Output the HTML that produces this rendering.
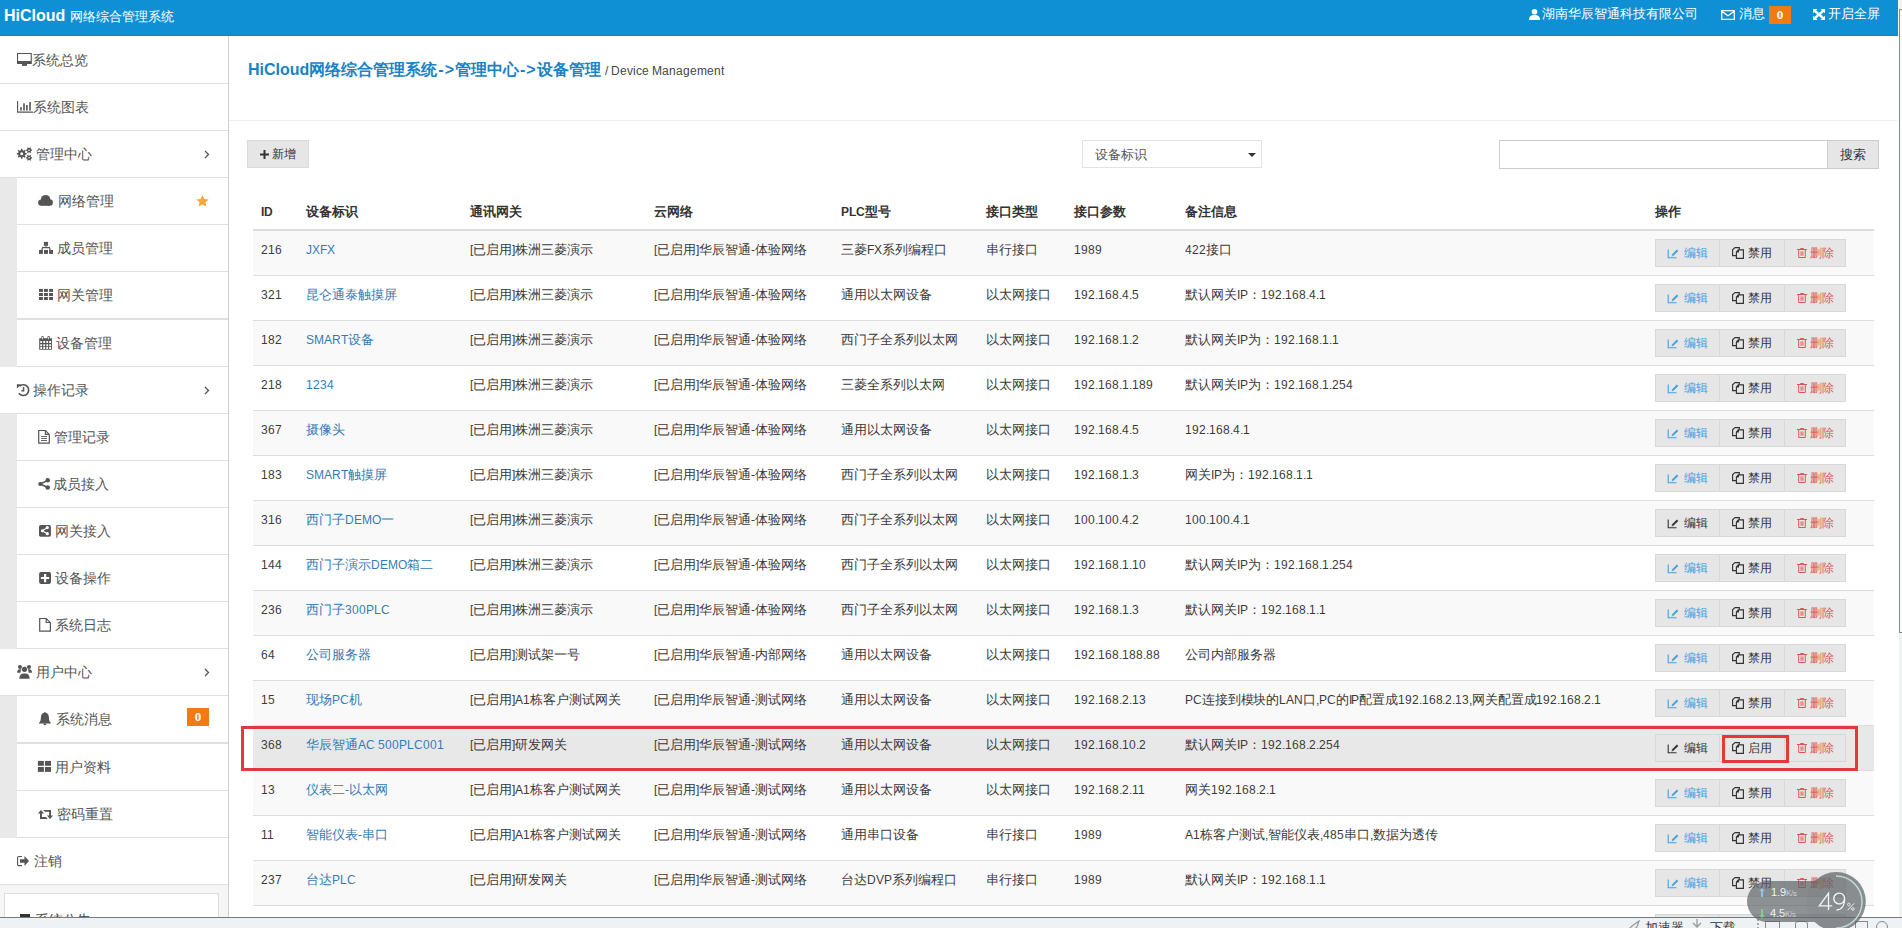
<!DOCTYPE html>
<html><head><meta charset="utf-8"><title>HiCloud</title><style>
@font-face{font-family:"LS";src:local("Liberation Sans");size-adjust:93%;unicode-range:U+0000-024F,U+2000-206F;}
@font-face{font-family:"LS";font-weight:bold;src:local("Liberation Sans Bold");size-adjust:93%;unicode-range:U+0000-024F,U+2000-206F;}
*{box-sizing:border-box}
html,body{margin:0;padding:0;width:1902px;height:928px;overflow:hidden;background:#fff;font-family:"LS","Liberation Sans",sans-serif;font-size:13px;color:#555}
.abs{position:absolute}
#hdr{position:absolute;left:0;top:0;width:1898px;height:36px;background:#0f90d5;border-bottom:1px solid #1682c0;color:#fff}
#hdr .logo{position:absolute;left:4px;top:6px;font-family:"Liberation Sans",sans-serif;font-size:16px;font-weight:bold;line-height:20px;white-space:nowrap}
#hdr .logo span{font-weight:normal;font-size:13px}
#hdr .it{position:absolute;top:6px;line-height:17px;white-space:nowrap}
#side{position:absolute;left:0;top:36px;width:229px;height:892px;border-right:1px solid #cfcfcf;background:#f5f5f5}
.si{position:absolute;left:0;width:228px;background:#fff;border-bottom:1px solid #e0e0e0}
.si.sub{left:17px;width:211px}
.strip{position:absolute;left:0;width:17px;background:#e9e9e9}
.ic{position:absolute;overflow:visible}
.st{position:absolute;top:1px;line-height:46px;font-size:14px;color:#555;white-space:nowrap}
.sub .st{left:0}
.badge{position:absolute;width:22px;height:18px;background:#f07a14;color:#fff;font:bold 13px/18px "Liberation Serif",serif;text-align:center}
#main{position:absolute;left:229px;top:36px;width:1669px;height:881px}
.crumb{position:absolute;left:19px;top:23px;font-family:"Liberation Sans",sans-serif;font-size:16px;font-weight:bold;color:#1a82c6;white-space:nowrap;line-height:22px}
.crumb .ar{letter-spacing:1px;margin-left:1px}
.crumb small{font-family:"LS","Liberation Sans",sans-serif;font-size:13px;font-weight:normal;color:#444}
.hr{position:absolute;left:0;top:84px;width:1669px;height:1px;background:#eee}
.btn{position:absolute;background:#e6e6e6;border:1px solid #dadada;color:#333}
.th{position:absolute;top:203px;font-weight:bold;color:#333;line-height:19px;white-space:nowrap}
.thb{position:absolute;left:253px;top:229px;width:1621px;height:2px;background:#ddd}
.tr{position:absolute;left:253px;width:1621px;height:45px;border-bottom:1px solid #ddd;background:#fff}
.tr.odd{background:#f9f9f9}
.tr.hov{background:#e8e8e8}
.td{position:absolute;top:10px;line-height:19px;white-space:nowrap;color:#3a3a3a}
.td.lk{color:#337ab7}
.bg{position:absolute;left:1402px;top:8px;height:28px;width:191px;display:flex}
.bg span{display:flex;align-items:center;justify-content:center;height:28px;background:#e6e6e6;border:1px solid #d8d8d8;font-size:12px;color:#333;white-space:nowrap}
.bg .b1{width:65px;color:#44a0e2}
.bg .b1.dk{color:#333}
.bg .b2{width:65px;border-left:none}
.bg .b3{width:61px;border-left:none;color:#dd5656}
.bi{margin-right:3px;fill:currentColor}
</style></head><body>
<div id="hdr">
 <div class="logo">HiCloud <span>网络综合管理系统</span></div>
 <svg class="ic" style="left:1529px;top:9px;width:11px;height:11px" viewBox="0 0 11 11" fill="#fff"><circle cx="5.5" cy="2.8" r="2.8"/><path d="M0 11c0-3.3 1.6-5 5.5-5s5.5 1.7 5.5 5z"/></svg>
 <span class="it" style="left:1542px">湖南华辰智通科技有限公司</span>
 <svg class="ic" style="left:1721px;top:10px;width:14px;height:10px" viewBox="0 0 14 10"><path d="M0.7 0.7h12.6v8.6H0.7z M0.7 1.2l6.3 4.6 6.3-4.6" fill="none" stroke="#fff" stroke-width="1.3"/></svg>
 <span class="it" style="left:1739px">消息</span>
 <span class="badge" style="left:1769px;top:6px">0</span>
 <svg class="ic" style="left:1813px;top:9px;width:12px;height:11px" viewBox="0 0 12 11" fill="#fff"><path d="M0 0h4.5L3.2 1.3l2.8 2.6L8.8 1.3 7.5 0H12v4.2L10.7 2.9 8 5.5l2.7 2.6L12 6.8V11H7.5l1.3-1.3L6 7.1 3.2 9.7 4.5 11H0V6.8l1.3 1.3L4 5.5 1.3 2.9 0 4.2z"/></svg>
 <span class="it" style="left:1828px">开启全屏</span>
</div>
<div id="side">
<div class="si" style="top:0px;height:48px;border-bottom-width:1px">
<span class="st" style="left:32px;line-height:47px">系统总览</span>
</div>
<div class="si" style="top:48px;height:47px;border-bottom-width:1px">
<span class="st" style="left:33px;line-height:46px">系统图表</span>
</div>
<div class="si" style="top:95px;height:47px;border-bottom-width:1px">
<span class="st" style="left:36px;line-height:46px">管理中心</span>
<svg class="ic" style="left:204px;top:19px;width:6px;height:9px" viewBox="0 0 6 9"><path d="M1 1l3.5 3.5L1 8" fill="none" stroke="#555" stroke-width="1.3"/></svg>
</div>
<div class="strip" style="top:142px;height:47px"></div>
<div class="si sub" style="top:142px;height:47px;border-bottom-width:1px">
<span class="st" style="left:41px;line-height:46px">网络管理</span>
<svg class="ic" style="left:179px;top:17px;width:13px;height:12px" viewBox="0 0 13 12"><path d="M6.5 0l1.9 4 4.3.4-3.2 2.9.9 4.3-3.9-2.2-3.9 2.2.9-4.3L.3 4.4l4.3-.4z" fill="#f3a93a"/></svg>
</div>
<div class="strip" style="top:189px;height:47px"></div>
<div class="si sub" style="top:189px;height:47px;border-bottom-width:1px">
<span class="st" style="left:40px;line-height:46px">成员管理</span>
</div>
<div class="strip" style="top:236px;height:48px"></div>
<div class="si sub" style="top:236px;height:48px;border-bottom-width:2px">
<span class="st" style="left:40px;line-height:46px">网关管理</span>
</div>
<div class="strip" style="top:284px;height:47px"></div>
<div class="si sub" style="top:284px;height:47px;border-bottom-width:1px">
<span class="st" style="left:39px;line-height:46px">设备管理</span>
</div>
<div class="si" style="top:331px;height:47px;border-bottom-width:1px">
<span class="st" style="left:33px;line-height:46px">操作记录</span>
<svg class="ic" style="left:204px;top:19px;width:6px;height:9px" viewBox="0 0 6 9"><path d="M1 1l3.5 3.5L1 8" fill="none" stroke="#555" stroke-width="1.3"/></svg>
</div>
<div class="strip" style="top:378px;height:47px"></div>
<div class="si sub" style="top:378px;height:47px;border-bottom-width:1px">
<span class="st" style="left:37px;line-height:46px">管理记录</span>
</div>
<div class="strip" style="top:425px;height:47px"></div>
<div class="si sub" style="top:425px;height:47px;border-bottom-width:1px">
<span class="st" style="left:36px;line-height:46px">成员接入</span>
</div>
<div class="strip" style="top:472px;height:47px"></div>
<div class="si sub" style="top:472px;height:47px;border-bottom-width:1px">
<span class="st" style="left:38px;line-height:46px">网关接入</span>
</div>
<div class="strip" style="top:519px;height:47px"></div>
<div class="si sub" style="top:519px;height:47px;border-bottom-width:1px">
<span class="st" style="left:38px;line-height:46px">设备操作</span>
</div>
<div class="strip" style="top:566px;height:47px"></div>
<div class="si sub" style="top:566px;height:47px;border-bottom-width:1px">
<span class="st" style="left:38px;line-height:46px">系统日志</span>
</div>
<div class="si" style="top:613px;height:47px;border-bottom-width:1px">
<span class="st" style="left:36px;line-height:46px">用户中心</span>
<svg class="ic" style="left:204px;top:19px;width:6px;height:9px" viewBox="0 0 6 9"><path d="M1 1l3.5 3.5L1 8" fill="none" stroke="#555" stroke-width="1.3"/></svg>
</div>
<div class="strip" style="top:660px;height:48px"></div>
<div class="si sub" style="top:660px;height:48px;border-bottom-width:2px">
<span class="st" style="left:39px;line-height:46px">系统消息</span>
<span class="badge" style="left:170px;top:12px">0</span>
</div>
<div class="strip" style="top:708px;height:47px"></div>
<div class="si sub" style="top:708px;height:47px;border-bottom-width:1px">
<span class="st" style="left:38px;line-height:46px">用户资料</span>
</div>
<div class="strip" style="top:755px;height:47px"></div>
<div class="si sub" style="top:755px;height:47px;border-bottom-width:1px">
<span class="st" style="left:40px;line-height:46px">密码重置</span>
</div>
<div class="si" style="top:802px;height:47px;border-bottom-width:1px">
<span class="st" style="left:34px;line-height:46px">注销</span>
</div>
<div class="abs" style="left:4px;top:857px;width:215px;height:40px;background:#fff;border:1px solid #ddd"></div>
<div class="abs" style="left:20px;top:878px;width:10px;height:6px;background:#333"></div>
<span class="abs" style="left:35px;top:876px;font-size:14px;line-height:18px;color:#444">系统公告</span>
</div>
<div id="main">
 <div class="crumb">HiCloud网络综合管理系统<span class="ar">-&gt;</span>管理中心<span class="ar">-&gt;</span>设备管理 <small>/ Device Management</small></div>
 <div class="hr"></div>
</div>
<div class="btn" style="left:247px;top:140px;width:62px;height:28px;font-size:12px;line-height:26px;padding-left:12px">
 <svg width="9" height="9" viewBox="0 0 9 9" style="vertical-align:-1px"><path d="M3.5 0h2v3.5H9v2H5.5V9h-2V5.5H0v-2h3.5z" fill="#333"/></svg> 新增</div>
<div class="abs" style="left:1082px;top:140px;width:180px;height:28px;border:1px solid #e3e3e3;background:#fff"></div>
<span class="abs" style="left:1095px;top:146px;line-height:19px;color:#555">设备标识</span>
<svg class="ic" style="left:1248px;top:153px;width:8px;height:4px" viewBox="0 0 8 4"><path d="M0 0h8L4 4z" fill="#333"/></svg>
<div class="abs" style="left:1499px;top:140px;width:329px;height:29px;border:1px solid #ccc;background:#fff"></div>
<div class="abs" style="left:1827px;top:140px;width:52px;height:29px;border:1px solid #ccc;background:#e6e6e6;color:#333;text-align:center;line-height:29px">搜索</div>
<div id="tbl">
<span class="th" style="left:261px">ID</span>
<span class="th" style="left:306px">设备标识</span>
<span class="th" style="left:470px">通讯网关</span>
<span class="th" style="left:654px">云网络</span>
<span class="th" style="left:841px">PLC型号</span>
<span class="th" style="left:986px">接口类型</span>
<span class="th" style="left:1074px">接口参数</span>
<span class="th" style="left:1185px">备注信息</span>
<span class="th" style="left:1655px">操作</span>
<div class="tr odd" style="top:231px">
<span class="td" style="left:8px">216</span>
<span class="td lk" style="left:53px">JXFX</span>
<span class="td" style="left:217px">[已启用]株洲三菱演示</span>
<span class="td" style="left:401px">[已启用]华辰智通-体验网络</span>
<span class="td" style="left:588px">三菱FX系列编程口</span>
<span class="td" style="left:733px">串行接口</span>
<span class="td" style="left:821px">1989</span>
<span class="td" style="left:932px">422接口</span>
<div class="bg"><span class="b1"><svg class="bi" width="13" height="11" viewBox="0 0 13 11" style="margin-right:4px"><path d="M1.2 1.5V9.8H9.5" fill="none" stroke="currentColor" stroke-width="1.1"/><path d="M5.4 7.4l5.2-5.2" fill="none" stroke="currentColor" stroke-width="2"/><path d="M4.6 8.4l.4-1.5 1.1 1.1z"/></svg>编辑</span><span class="b2"><svg class="bi" width="12" height="12" viewBox="0 0 12 12" style="margin-right:4px"><path d="M2.8 0.6H7.3V2.8 M2.8 0.6L0.6 2.8V8.6H4.3" fill="none" stroke="currentColor" stroke-width="1.15"/><path d="M6.4 2.9H11.4V11.4H4.4V4.9Z M6.4 2.9V4.9H4.4" fill="none" stroke="currentColor" stroke-width="1.15"/></svg>禁用</span><span class="b3"><svg class="bi" width="10" height="10" viewBox="0 0 10 10" style="margin-right:3px"><path d="M0 1.5H10 M3.4 1.5V0.5H6.6V1.5 M1.7 1.5V9.5H8.3V1.5 M4.1 3.4V7.8 M5.9 3.4V7.8" fill="none" stroke="currentColor" stroke-width="1"/></svg>删除</span></div>
</div>
<div class="tr" style="top:276px">
<span class="td" style="left:8px">321</span>
<span class="td lk" style="left:53px">昆仑通泰触摸屏</span>
<span class="td" style="left:217px">[已启用]株洲三菱演示</span>
<span class="td" style="left:401px">[已启用]华辰智通-体验网络</span>
<span class="td" style="left:588px">通用以太网设备</span>
<span class="td" style="left:733px">以太网接口</span>
<span class="td" style="left:821px">192.168.4.5</span>
<span class="td" style="left:932px">默认网关IP：192.168.4.1</span>
<div class="bg"><span class="b1"><svg class="bi" width="13" height="11" viewBox="0 0 13 11" style="margin-right:4px"><path d="M1.2 1.5V9.8H9.5" fill="none" stroke="currentColor" stroke-width="1.1"/><path d="M5.4 7.4l5.2-5.2" fill="none" stroke="currentColor" stroke-width="2"/><path d="M4.6 8.4l.4-1.5 1.1 1.1z"/></svg>编辑</span><span class="b2"><svg class="bi" width="12" height="12" viewBox="0 0 12 12" style="margin-right:4px"><path d="M2.8 0.6H7.3V2.8 M2.8 0.6L0.6 2.8V8.6H4.3" fill="none" stroke="currentColor" stroke-width="1.15"/><path d="M6.4 2.9H11.4V11.4H4.4V4.9Z M6.4 2.9V4.9H4.4" fill="none" stroke="currentColor" stroke-width="1.15"/></svg>禁用</span><span class="b3"><svg class="bi" width="10" height="10" viewBox="0 0 10 10" style="margin-right:3px"><path d="M0 1.5H10 M3.4 1.5V0.5H6.6V1.5 M1.7 1.5V9.5H8.3V1.5 M4.1 3.4V7.8 M5.9 3.4V7.8" fill="none" stroke="currentColor" stroke-width="1"/></svg>删除</span></div>
</div>
<div class="tr odd" style="top:321px">
<span class="td" style="left:8px">182</span>
<span class="td lk" style="left:53px">SMART设备</span>
<span class="td" style="left:217px">[已启用]株洲三菱演示</span>
<span class="td" style="left:401px">[已启用]华辰智通-体验网络</span>
<span class="td" style="left:588px">西门子全系列以太网</span>
<span class="td" style="left:733px">以太网接口</span>
<span class="td" style="left:821px">192.168.1.2</span>
<span class="td" style="left:932px">默认网关IP为：192.168.1.1</span>
<div class="bg"><span class="b1"><svg class="bi" width="13" height="11" viewBox="0 0 13 11" style="margin-right:4px"><path d="M1.2 1.5V9.8H9.5" fill="none" stroke="currentColor" stroke-width="1.1"/><path d="M5.4 7.4l5.2-5.2" fill="none" stroke="currentColor" stroke-width="2"/><path d="M4.6 8.4l.4-1.5 1.1 1.1z"/></svg>编辑</span><span class="b2"><svg class="bi" width="12" height="12" viewBox="0 0 12 12" style="margin-right:4px"><path d="M2.8 0.6H7.3V2.8 M2.8 0.6L0.6 2.8V8.6H4.3" fill="none" stroke="currentColor" stroke-width="1.15"/><path d="M6.4 2.9H11.4V11.4H4.4V4.9Z M6.4 2.9V4.9H4.4" fill="none" stroke="currentColor" stroke-width="1.15"/></svg>禁用</span><span class="b3"><svg class="bi" width="10" height="10" viewBox="0 0 10 10" style="margin-right:3px"><path d="M0 1.5H10 M3.4 1.5V0.5H6.6V1.5 M1.7 1.5V9.5H8.3V1.5 M4.1 3.4V7.8 M5.9 3.4V7.8" fill="none" stroke="currentColor" stroke-width="1"/></svg>删除</span></div>
</div>
<div class="tr" style="top:366px">
<span class="td" style="left:8px">218</span>
<span class="td lk" style="left:53px">1234</span>
<span class="td" style="left:217px">[已启用]株洲三菱演示</span>
<span class="td" style="left:401px">[已启用]华辰智通-体验网络</span>
<span class="td" style="left:588px">三菱全系列以太网</span>
<span class="td" style="left:733px">以太网接口</span>
<span class="td" style="left:821px">192.168.1.189</span>
<span class="td" style="left:932px">默认网关IP为：192.168.1.254</span>
<div class="bg"><span class="b1"><svg class="bi" width="13" height="11" viewBox="0 0 13 11" style="margin-right:4px"><path d="M1.2 1.5V9.8H9.5" fill="none" stroke="currentColor" stroke-width="1.1"/><path d="M5.4 7.4l5.2-5.2" fill="none" stroke="currentColor" stroke-width="2"/><path d="M4.6 8.4l.4-1.5 1.1 1.1z"/></svg>编辑</span><span class="b2"><svg class="bi" width="12" height="12" viewBox="0 0 12 12" style="margin-right:4px"><path d="M2.8 0.6H7.3V2.8 M2.8 0.6L0.6 2.8V8.6H4.3" fill="none" stroke="currentColor" stroke-width="1.15"/><path d="M6.4 2.9H11.4V11.4H4.4V4.9Z M6.4 2.9V4.9H4.4" fill="none" stroke="currentColor" stroke-width="1.15"/></svg>禁用</span><span class="b3"><svg class="bi" width="10" height="10" viewBox="0 0 10 10" style="margin-right:3px"><path d="M0 1.5H10 M3.4 1.5V0.5H6.6V1.5 M1.7 1.5V9.5H8.3V1.5 M4.1 3.4V7.8 M5.9 3.4V7.8" fill="none" stroke="currentColor" stroke-width="1"/></svg>删除</span></div>
</div>
<div class="tr odd" style="top:411px">
<span class="td" style="left:8px">367</span>
<span class="td lk" style="left:53px">摄像头</span>
<span class="td" style="left:217px">[已启用]株洲三菱演示</span>
<span class="td" style="left:401px">[已启用]华辰智通-体验网络</span>
<span class="td" style="left:588px">通用以太网设备</span>
<span class="td" style="left:733px">以太网接口</span>
<span class="td" style="left:821px">192.168.4.5</span>
<span class="td" style="left:932px">192.168.4.1</span>
<div class="bg"><span class="b1"><svg class="bi" width="13" height="11" viewBox="0 0 13 11" style="margin-right:4px"><path d="M1.2 1.5V9.8H9.5" fill="none" stroke="currentColor" stroke-width="1.1"/><path d="M5.4 7.4l5.2-5.2" fill="none" stroke="currentColor" stroke-width="2"/><path d="M4.6 8.4l.4-1.5 1.1 1.1z"/></svg>编辑</span><span class="b2"><svg class="bi" width="12" height="12" viewBox="0 0 12 12" style="margin-right:4px"><path d="M2.8 0.6H7.3V2.8 M2.8 0.6L0.6 2.8V8.6H4.3" fill="none" stroke="currentColor" stroke-width="1.15"/><path d="M6.4 2.9H11.4V11.4H4.4V4.9Z M6.4 2.9V4.9H4.4" fill="none" stroke="currentColor" stroke-width="1.15"/></svg>禁用</span><span class="b3"><svg class="bi" width="10" height="10" viewBox="0 0 10 10" style="margin-right:3px"><path d="M0 1.5H10 M3.4 1.5V0.5H6.6V1.5 M1.7 1.5V9.5H8.3V1.5 M4.1 3.4V7.8 M5.9 3.4V7.8" fill="none" stroke="currentColor" stroke-width="1"/></svg>删除</span></div>
</div>
<div class="tr" style="top:456px">
<span class="td" style="left:8px">183</span>
<span class="td lk" style="left:53px">SMART触摸屏</span>
<span class="td" style="left:217px">[已启用]株洲三菱演示</span>
<span class="td" style="left:401px">[已启用]华辰智通-体验网络</span>
<span class="td" style="left:588px">西门子全系列以太网</span>
<span class="td" style="left:733px">以太网接口</span>
<span class="td" style="left:821px">192.168.1.3</span>
<span class="td" style="left:932px">网关IP为：192.168.1.1</span>
<div class="bg"><span class="b1"><svg class="bi" width="13" height="11" viewBox="0 0 13 11" style="margin-right:4px"><path d="M1.2 1.5V9.8H9.5" fill="none" stroke="currentColor" stroke-width="1.1"/><path d="M5.4 7.4l5.2-5.2" fill="none" stroke="currentColor" stroke-width="2"/><path d="M4.6 8.4l.4-1.5 1.1 1.1z"/></svg>编辑</span><span class="b2"><svg class="bi" width="12" height="12" viewBox="0 0 12 12" style="margin-right:4px"><path d="M2.8 0.6H7.3V2.8 M2.8 0.6L0.6 2.8V8.6H4.3" fill="none" stroke="currentColor" stroke-width="1.15"/><path d="M6.4 2.9H11.4V11.4H4.4V4.9Z M6.4 2.9V4.9H4.4" fill="none" stroke="currentColor" stroke-width="1.15"/></svg>禁用</span><span class="b3"><svg class="bi" width="10" height="10" viewBox="0 0 10 10" style="margin-right:3px"><path d="M0 1.5H10 M3.4 1.5V0.5H6.6V1.5 M1.7 1.5V9.5H8.3V1.5 M4.1 3.4V7.8 M5.9 3.4V7.8" fill="none" stroke="currentColor" stroke-width="1"/></svg>删除</span></div>
</div>
<div class="tr odd" style="top:501px">
<span class="td" style="left:8px">316</span>
<span class="td lk" style="left:53px">西门子DEMO一</span>
<span class="td" style="left:217px">[已启用]株洲三菱演示</span>
<span class="td" style="left:401px">[已启用]华辰智通-体验网络</span>
<span class="td" style="left:588px">西门子全系列以太网</span>
<span class="td" style="left:733px">以太网接口</span>
<span class="td" style="left:821px">100.100.4.2</span>
<span class="td" style="left:932px">100.100.4.1</span>
<div class="bg"><span class="b1 dk"><svg class="bi" width="13" height="11" viewBox="0 0 13 11" style="margin-right:4px"><path d="M1.2 1.5V9.8H9.5" fill="none" stroke="currentColor" stroke-width="1.1"/><path d="M5.4 7.4l5.2-5.2" fill="none" stroke="currentColor" stroke-width="2"/><path d="M4.6 8.4l.4-1.5 1.1 1.1z"/></svg>编辑</span><span class="b2"><svg class="bi" width="12" height="12" viewBox="0 0 12 12" style="margin-right:4px"><path d="M2.8 0.6H7.3V2.8 M2.8 0.6L0.6 2.8V8.6H4.3" fill="none" stroke="currentColor" stroke-width="1.15"/><path d="M6.4 2.9H11.4V11.4H4.4V4.9Z M6.4 2.9V4.9H4.4" fill="none" stroke="currentColor" stroke-width="1.15"/></svg>禁用</span><span class="b3"><svg class="bi" width="10" height="10" viewBox="0 0 10 10" style="margin-right:3px"><path d="M0 1.5H10 M3.4 1.5V0.5H6.6V1.5 M1.7 1.5V9.5H8.3V1.5 M4.1 3.4V7.8 M5.9 3.4V7.8" fill="none" stroke="currentColor" stroke-width="1"/></svg>删除</span></div>
</div>
<div class="tr" style="top:546px">
<span class="td" style="left:8px">144</span>
<span class="td lk" style="left:53px">西门子演示DEMO箱二</span>
<span class="td" style="left:217px">[已启用]株洲三菱演示</span>
<span class="td" style="left:401px">[已启用]华辰智通-体验网络</span>
<span class="td" style="left:588px">西门子全系列以太网</span>
<span class="td" style="left:733px">以太网接口</span>
<span class="td" style="left:821px">192.168.1.10</span>
<span class="td" style="left:932px">默认网关IP为：192.168.1.254</span>
<div class="bg"><span class="b1"><svg class="bi" width="13" height="11" viewBox="0 0 13 11" style="margin-right:4px"><path d="M1.2 1.5V9.8H9.5" fill="none" stroke="currentColor" stroke-width="1.1"/><path d="M5.4 7.4l5.2-5.2" fill="none" stroke="currentColor" stroke-width="2"/><path d="M4.6 8.4l.4-1.5 1.1 1.1z"/></svg>编辑</span><span class="b2"><svg class="bi" width="12" height="12" viewBox="0 0 12 12" style="margin-right:4px"><path d="M2.8 0.6H7.3V2.8 M2.8 0.6L0.6 2.8V8.6H4.3" fill="none" stroke="currentColor" stroke-width="1.15"/><path d="M6.4 2.9H11.4V11.4H4.4V4.9Z M6.4 2.9V4.9H4.4" fill="none" stroke="currentColor" stroke-width="1.15"/></svg>禁用</span><span class="b3"><svg class="bi" width="10" height="10" viewBox="0 0 10 10" style="margin-right:3px"><path d="M0 1.5H10 M3.4 1.5V0.5H6.6V1.5 M1.7 1.5V9.5H8.3V1.5 M4.1 3.4V7.8 M5.9 3.4V7.8" fill="none" stroke="currentColor" stroke-width="1"/></svg>删除</span></div>
</div>
<div class="tr odd" style="top:591px">
<span class="td" style="left:8px">236</span>
<span class="td lk" style="left:53px">西门子300PLC</span>
<span class="td" style="left:217px">[已启用]株洲三菱演示</span>
<span class="td" style="left:401px">[已启用]华辰智通-体验网络</span>
<span class="td" style="left:588px">西门子全系列以太网</span>
<span class="td" style="left:733px">以太网接口</span>
<span class="td" style="left:821px">192.168.1.3</span>
<span class="td" style="left:932px">默认网关IP：192.168.1.1</span>
<div class="bg"><span class="b1"><svg class="bi" width="13" height="11" viewBox="0 0 13 11" style="margin-right:4px"><path d="M1.2 1.5V9.8H9.5" fill="none" stroke="currentColor" stroke-width="1.1"/><path d="M5.4 7.4l5.2-5.2" fill="none" stroke="currentColor" stroke-width="2"/><path d="M4.6 8.4l.4-1.5 1.1 1.1z"/></svg>编辑</span><span class="b2"><svg class="bi" width="12" height="12" viewBox="0 0 12 12" style="margin-right:4px"><path d="M2.8 0.6H7.3V2.8 M2.8 0.6L0.6 2.8V8.6H4.3" fill="none" stroke="currentColor" stroke-width="1.15"/><path d="M6.4 2.9H11.4V11.4H4.4V4.9Z M6.4 2.9V4.9H4.4" fill="none" stroke="currentColor" stroke-width="1.15"/></svg>禁用</span><span class="b3"><svg class="bi" width="10" height="10" viewBox="0 0 10 10" style="margin-right:3px"><path d="M0 1.5H10 M3.4 1.5V0.5H6.6V1.5 M1.7 1.5V9.5H8.3V1.5 M4.1 3.4V7.8 M5.9 3.4V7.8" fill="none" stroke="currentColor" stroke-width="1"/></svg>删除</span></div>
</div>
<div class="tr" style="top:636px">
<span class="td" style="left:8px">64</span>
<span class="td lk" style="left:53px">公司服务器</span>
<span class="td" style="left:217px">[已启用]测试架一号</span>
<span class="td" style="left:401px">[已启用]华辰智通-内部网络</span>
<span class="td" style="left:588px">通用以太网设备</span>
<span class="td" style="left:733px">以太网接口</span>
<span class="td" style="left:821px">192.168.188.88</span>
<span class="td" style="left:932px">公司内部服务器</span>
<div class="bg"><span class="b1"><svg class="bi" width="13" height="11" viewBox="0 0 13 11" style="margin-right:4px"><path d="M1.2 1.5V9.8H9.5" fill="none" stroke="currentColor" stroke-width="1.1"/><path d="M5.4 7.4l5.2-5.2" fill="none" stroke="currentColor" stroke-width="2"/><path d="M4.6 8.4l.4-1.5 1.1 1.1z"/></svg>编辑</span><span class="b2"><svg class="bi" width="12" height="12" viewBox="0 0 12 12" style="margin-right:4px"><path d="M2.8 0.6H7.3V2.8 M2.8 0.6L0.6 2.8V8.6H4.3" fill="none" stroke="currentColor" stroke-width="1.15"/><path d="M6.4 2.9H11.4V11.4H4.4V4.9Z M6.4 2.9V4.9H4.4" fill="none" stroke="currentColor" stroke-width="1.15"/></svg>禁用</span><span class="b3"><svg class="bi" width="10" height="10" viewBox="0 0 10 10" style="margin-right:3px"><path d="M0 1.5H10 M3.4 1.5V0.5H6.6V1.5 M1.7 1.5V9.5H8.3V1.5 M4.1 3.4V7.8 M5.9 3.4V7.8" fill="none" stroke="currentColor" stroke-width="1"/></svg>删除</span></div>
</div>
<div class="tr odd" style="top:681px">
<span class="td" style="left:8px">15</span>
<span class="td lk" style="left:53px">现场PC机</span>
<span class="td" style="left:217px">[已启用]A1栋客户测试网关</span>
<span class="td" style="left:401px">[已启用]华辰智通-测试网络</span>
<span class="td" style="left:588px">通用以太网设备</span>
<span class="td" style="left:733px">以太网接口</span>
<span class="td" style="left:821px">192.168.2.13</span>
<span class="td" style="left:932px;letter-spacing:-0.09px">PC连接到模块的LAN口,PC的IP配置成192.168.2.13,网关配置成192.168.2.1</span>
<div class="bg"><span class="b1"><svg class="bi" width="13" height="11" viewBox="0 0 13 11" style="margin-right:4px"><path d="M1.2 1.5V9.8H9.5" fill="none" stroke="currentColor" stroke-width="1.1"/><path d="M5.4 7.4l5.2-5.2" fill="none" stroke="currentColor" stroke-width="2"/><path d="M4.6 8.4l.4-1.5 1.1 1.1z"/></svg>编辑</span><span class="b2"><svg class="bi" width="12" height="12" viewBox="0 0 12 12" style="margin-right:4px"><path d="M2.8 0.6H7.3V2.8 M2.8 0.6L0.6 2.8V8.6H4.3" fill="none" stroke="currentColor" stroke-width="1.15"/><path d="M6.4 2.9H11.4V11.4H4.4V4.9Z M6.4 2.9V4.9H4.4" fill="none" stroke="currentColor" stroke-width="1.15"/></svg>禁用</span><span class="b3"><svg class="bi" width="10" height="10" viewBox="0 0 10 10" style="margin-right:3px"><path d="M0 1.5H10 M3.4 1.5V0.5H6.6V1.5 M1.7 1.5V9.5H8.3V1.5 M4.1 3.4V7.8 M5.9 3.4V7.8" fill="none" stroke="currentColor" stroke-width="1"/></svg>删除</span></div>
</div>
<div class="tr hov" style="top:726px">
<span class="td" style="left:8px">368</span>
<span class="td lk" style="left:53px">华辰智通AC 500PLC001</span>
<span class="td" style="left:217px">[已启用]研发网关</span>
<span class="td" style="left:401px">[已启用]华辰智通-测试网络</span>
<span class="td" style="left:588px">通用以太网设备</span>
<span class="td" style="left:733px">以太网接口</span>
<span class="td" style="left:821px">192.168.10.2</span>
<span class="td" style="left:932px">默认网关IP：192.168.2.254</span>
<div class="bg"><span class="b1 dk"><svg class="bi" width="13" height="11" viewBox="0 0 13 11" style="margin-right:4px"><path d="M1.2 1.5V9.8H9.5" fill="none" stroke="currentColor" stroke-width="1.1"/><path d="M5.4 7.4l5.2-5.2" fill="none" stroke="currentColor" stroke-width="2"/><path d="M4.6 8.4l.4-1.5 1.1 1.1z"/></svg>编辑</span><span class="b2"><svg class="bi" width="12" height="12" viewBox="0 0 12 12" style="margin-right:4px"><path d="M2.8 0.6H7.3V2.8 M2.8 0.6L0.6 2.8V8.6H4.3" fill="none" stroke="currentColor" stroke-width="1.15"/><path d="M6.4 2.9H11.4V11.4H4.4V4.9Z M6.4 2.9V4.9H4.4" fill="none" stroke="currentColor" stroke-width="1.15"/></svg>启用</span><span class="b3"><svg class="bi" width="10" height="10" viewBox="0 0 10 10" style="margin-right:3px"><path d="M0 1.5H10 M3.4 1.5V0.5H6.6V1.5 M1.7 1.5V9.5H8.3V1.5 M4.1 3.4V7.8 M5.9 3.4V7.8" fill="none" stroke="currentColor" stroke-width="1"/></svg>删除</span></div>
</div>
<div class="tr odd" style="top:771px">
<span class="td" style="left:8px">13</span>
<span class="td lk" style="left:53px">仪表二-以太网</span>
<span class="td" style="left:217px">[已启用]A1栋客户测试网关</span>
<span class="td" style="left:401px">[已启用]华辰智通-测试网络</span>
<span class="td" style="left:588px">通用以太网设备</span>
<span class="td" style="left:733px">以太网接口</span>
<span class="td" style="left:821px">192.168.2.11</span>
<span class="td" style="left:932px">网关192.168.2.1</span>
<div class="bg"><span class="b1"><svg class="bi" width="13" height="11" viewBox="0 0 13 11" style="margin-right:4px"><path d="M1.2 1.5V9.8H9.5" fill="none" stroke="currentColor" stroke-width="1.1"/><path d="M5.4 7.4l5.2-5.2" fill="none" stroke="currentColor" stroke-width="2"/><path d="M4.6 8.4l.4-1.5 1.1 1.1z"/></svg>编辑</span><span class="b2"><svg class="bi" width="12" height="12" viewBox="0 0 12 12" style="margin-right:4px"><path d="M2.8 0.6H7.3V2.8 M2.8 0.6L0.6 2.8V8.6H4.3" fill="none" stroke="currentColor" stroke-width="1.15"/><path d="M6.4 2.9H11.4V11.4H4.4V4.9Z M6.4 2.9V4.9H4.4" fill="none" stroke="currentColor" stroke-width="1.15"/></svg>禁用</span><span class="b3"><svg class="bi" width="10" height="10" viewBox="0 0 10 10" style="margin-right:3px"><path d="M0 1.5H10 M3.4 1.5V0.5H6.6V1.5 M1.7 1.5V9.5H8.3V1.5 M4.1 3.4V7.8 M5.9 3.4V7.8" fill="none" stroke="currentColor" stroke-width="1"/></svg>删除</span></div>
</div>
<div class="tr" style="top:816px">
<span class="td" style="left:8px">11</span>
<span class="td lk" style="left:53px">智能仪表-串口</span>
<span class="td" style="left:217px">[已启用]A1栋客户测试网关</span>
<span class="td" style="left:401px">[已启用]华辰智通-测试网络</span>
<span class="td" style="left:588px">通用串口设备</span>
<span class="td" style="left:733px">串行接口</span>
<span class="td" style="left:821px">1989</span>
<span class="td" style="left:932px">A1栋客户测试,智能仪表,485串口,数据为透传</span>
<div class="bg"><span class="b1"><svg class="bi" width="13" height="11" viewBox="0 0 13 11" style="margin-right:4px"><path d="M1.2 1.5V9.8H9.5" fill="none" stroke="currentColor" stroke-width="1.1"/><path d="M5.4 7.4l5.2-5.2" fill="none" stroke="currentColor" stroke-width="2"/><path d="M4.6 8.4l.4-1.5 1.1 1.1z"/></svg>编辑</span><span class="b2"><svg class="bi" width="12" height="12" viewBox="0 0 12 12" style="margin-right:4px"><path d="M2.8 0.6H7.3V2.8 M2.8 0.6L0.6 2.8V8.6H4.3" fill="none" stroke="currentColor" stroke-width="1.15"/><path d="M6.4 2.9H11.4V11.4H4.4V4.9Z M6.4 2.9V4.9H4.4" fill="none" stroke="currentColor" stroke-width="1.15"/></svg>禁用</span><span class="b3"><svg class="bi" width="10" height="10" viewBox="0 0 10 10" style="margin-right:3px"><path d="M0 1.5H10 M3.4 1.5V0.5H6.6V1.5 M1.7 1.5V9.5H8.3V1.5 M4.1 3.4V7.8 M5.9 3.4V7.8" fill="none" stroke="currentColor" stroke-width="1"/></svg>删除</span></div>
</div>
<div class="tr odd" style="top:861px">
<span class="td" style="left:8px">237</span>
<span class="td lk" style="left:53px">台达PLC</span>
<span class="td" style="left:217px">[已启用]研发网关</span>
<span class="td" style="left:401px">[已启用]华辰智通-测试网络</span>
<span class="td" style="left:588px">台达DVP系列编程口</span>
<span class="td" style="left:733px">串行接口</span>
<span class="td" style="left:821px">1989</span>
<span class="td" style="left:932px">默认网关IP：192.168.1.1</span>
<div class="bg"><span class="b1"><svg class="bi" width="13" height="11" viewBox="0 0 13 11" style="margin-right:4px"><path d="M1.2 1.5V9.8H9.5" fill="none" stroke="currentColor" stroke-width="1.1"/><path d="M5.4 7.4l5.2-5.2" fill="none" stroke="currentColor" stroke-width="2"/><path d="M4.6 8.4l.4-1.5 1.1 1.1z"/></svg>编辑</span><span class="b2"><svg class="bi" width="12" height="12" viewBox="0 0 12 12" style="margin-right:4px"><path d="M2.8 0.6H7.3V2.8 M2.8 0.6L0.6 2.8V8.6H4.3" fill="none" stroke="currentColor" stroke-width="1.15"/><path d="M6.4 2.9H11.4V11.4H4.4V4.9Z M6.4 2.9V4.9H4.4" fill="none" stroke="currentColor" stroke-width="1.15"/></svg>禁用</span><span class="b3"><svg class="bi" width="10" height="10" viewBox="0 0 10 10" style="margin-right:3px"><path d="M0 1.5H10 M3.4 1.5V0.5H6.6V1.5 M1.7 1.5V9.5H8.3V1.5 M4.1 3.4V7.8 M5.9 3.4V7.8" fill="none" stroke="currentColor" stroke-width="1"/></svg>删除</span></div>
</div>
<div class="tr" style="top:906px">
<span class="td" style="left:8px"></span>
<span class="td lk" style="left:53px"></span>
<span class="td" style="left:217px"></span>
<span class="td" style="left:401px"></span>
<span class="td" style="left:588px"></span>
<span class="td" style="left:733px"></span>
<span class="td" style="left:821px"></span>
<span class="td" style="left:932px"></span>
<div class="bg"><span class="b1"><svg class="bi" width="13" height="11" viewBox="0 0 13 11" style="margin-right:4px"><path d="M1.2 1.5V9.8H9.5" fill="none" stroke="currentColor" stroke-width="1.1"/><path d="M5.4 7.4l5.2-5.2" fill="none" stroke="currentColor" stroke-width="2"/><path d="M4.6 8.4l.4-1.5 1.1 1.1z"/></svg>编辑</span><span class="b2"><svg class="bi" width="12" height="12" viewBox="0 0 12 12" style="margin-right:4px"><path d="M2.8 0.6H7.3V2.8 M2.8 0.6L0.6 2.8V8.6H4.3" fill="none" stroke="currentColor" stroke-width="1.15"/><path d="M6.4 2.9H11.4V11.4H4.4V4.9Z M6.4 2.9V4.9H4.4" fill="none" stroke="currentColor" stroke-width="1.15"/></svg>禁用</span><span class="b3"><svg class="bi" width="10" height="10" viewBox="0 0 10 10" style="margin-right:3px"><path d="M0 1.5H10 M3.4 1.5V0.5H6.6V1.5 M1.7 1.5V9.5H8.3V1.5 M4.1 3.4V7.8 M5.9 3.4V7.8" fill="none" stroke="currentColor" stroke-width="1"/></svg>删除</span></div>
</div>
</div>
<div class="thb"></div>
<div class="abs" style="left:241px;top:726px;width:1617px;height:45px;border:3px solid #e5383b"></div>
<div class="abs" style="left:1722px;top:735px;width:67px;height:28px;border:3px solid #e5383b"></div>
<div class="abs" style="left:1898px;top:0;width:4px;height:928px;background:#fff"></div>
<div class="abs" style="left:1899px;top:0;width:3px;height:928px;background:#f1f3f2"></div>
<div class="abs" style="left:1899px;top:9px;width:3px;height:624px;border:1px solid #8a8a8a;border-right:none;background:#fafcfb"></div>
<svg class="ic" style="left:0;top:0;width:240px;height:928px" viewBox="0 0 240 928" fill="#555"><path fill-rule="evenodd" d="M17 53h14.8v11H17z M18.1 54.1v7h12.6v-7z"/><path d="M22 64h5v1.9h-5z"/><path d="M17.6 101v11.1H33.1" fill="none" stroke="#555" stroke-width="1.1"/><rect x="20.2" y="107.1" width="1.6" height="3.5"/><rect x="23.2" y="103.3" width="1.6" height="7.3"/><rect x="26.1" y="105" width="1.6" height="5.6"/><rect x="29.2" y="102" width="1.6" height="8.6"/><path fill-rule="evenodd" d="M25.36 152.96 L26.69 153.00 L26.69 154.50 L25.36 154.54 L24.87 155.74 L25.78 156.71 L24.71 157.78 L23.74 156.87 L22.54 157.36 L22.50 158.69 L21.00 158.69 L20.96 157.36 L19.76 156.87 L18.79 157.78 L17.72 156.71 L18.63 155.74 L18.14 154.54 L16.81 154.50 L16.81 153.00 L18.14 152.96 L18.63 151.76 L17.72 150.79 L18.79 149.72 L19.76 150.63 L20.96 150.14 L21.00 148.81 L22.50 148.81 L22.54 150.14 L23.74 150.63 L24.71 149.72 L25.78 150.79 L24.87 151.76Z M20.25 153.75 a1.5 1.5 0 1 0 3.00 0 a1.5 1.5 0 1 0 -3.00 0Z"/><path fill-rule="evenodd" d="M31.21 149.58 L32.14 149.58 L32.14 150.82 L31.21 150.82 L30.70 151.71 L31.16 152.52 L30.08 153.14 L29.61 152.34 L28.59 152.34 L28.12 153.14 L27.04 152.52 L27.50 151.71 L26.99 150.82 L26.06 150.82 L26.06 149.58 L26.99 149.58 L27.50 148.69 L27.04 147.88 L28.12 147.26 L28.59 148.06 L29.61 148.06 L30.08 147.26 L31.16 147.88 L30.70 148.69Z M28.30 150.20 a0.8 0.8 0 1 0 1.60 0 a0.8 0.8 0 1 0 -1.60 0Z"/><path fill-rule="evenodd" d="M31.21 157.18 L32.14 157.18 L32.14 158.42 L31.21 158.42 L30.70 159.31 L31.16 160.12 L30.08 160.74 L29.61 159.94 L28.59 159.94 L28.12 160.74 L27.04 160.12 L27.50 159.31 L26.99 158.42 L26.06 158.42 L26.06 157.18 L26.99 157.18 L27.50 156.29 L27.04 155.48 L28.12 154.86 L28.59 155.66 L29.61 155.66 L30.08 154.86 L31.16 155.48 L30.70 156.29Z M28.30 157.80 a0.8 0.8 0 1 0 1.60 0 a0.8 0.8 0 1 0 -1.60 0Z"/><circle cx="41.3" cy="202.6" r="3.2"/><circle cx="45.6" cy="199.6" r="4.7"/><circle cx="49.6" cy="202.5" r="3.3"/><rect x="41.3" y="201" width="8.3" height="4.8"/><rect x="43.9" y="241.9" width="4.1" height="3.9"/><rect x="45.5" y="245.5" width="1" height="1.8"/><path d="M41.2 249.9l1-2.8h7.6l1 2.8h-1.2l-.6-1.6h-6l-.6 1.6z"/><rect x="39" y="250" width="3.9" height="3.9"/><rect x="44" y="250" width="4" height="3.9"/><rect x="49.1" y="250" width="3.9" height="3.9"/><rect x="39" y="288.9" width="3.9" height="3"/><rect x="39" y="293" width="3.9" height="3"/><rect x="39" y="297" width="3.9" height="3"/><rect x="44" y="288.9" width="3.9" height="3"/><rect x="44" y="293" width="3.9" height="3"/><rect x="44" y="297" width="3.9" height="3"/><rect x="49.1" y="288.9" width="3.9" height="3"/><rect x="49.1" y="293" width="3.9" height="3"/><rect x="49.1" y="297" width="3.9" height="3"/><path fill-rule="evenodd" d="M39.2 338.3h12.7v11.4H39.2z M40.3 341.1h1.8v2h-1.8z M40.3 344.2h1.8v2h-1.8z M40.3 347.1h1.8v2h-1.8z M43.3 341.1h1.8v2h-1.8z M43.3 344.2h1.8v2h-1.8z M43.3 347.1h1.8v2h-1.8z M46.3 341.1h1.8v2h-1.8z M46.3 344.2h1.8v2h-1.8z M46.3 347.1h1.8v2h-1.8z M49.2 341.1h1.8v2h-1.8z M49.2 344.2h1.8v2h-1.8z M49.2 347.1h1.8v2h-1.8z "/><rect x="41.4" y="335.9" width="2.3" height="4.2" rx="1"/><rect x="47.5" y="335.9" width="2.3" height="4.2" rx="1"/><rect x="42.2" y="336.9" width=".8" height="2.4" fill="#fff"/><rect x="48.3" y="336.9" width=".8" height="2.4" fill="#fff"/><path d="M19.6 386.2A5.4 5.4 0 1 1 18.9 393.3" fill="none" stroke="#555" stroke-width="1.6"/><path d="M16.9 384.3h4.6l-4.6 4.3z"/><path d="M23.6 387v3.7h-2.2" fill="none" stroke="#555" stroke-width="1.5"/><path d="M38.7 430.5H45.4L49.3 434.4V443.1H38.7Z M45.4 430.5V434.4H49.3" fill="none" stroke="#555" stroke-width="1.2"/><path d="M41.1 436.5H47M41.1 438.5H47M41.1 440.5H47" fill="none" stroke="#555" stroke-width=".9"/><circle cx="40.3" cy="484" r="2.1"/><circle cx="47.7" cy="480.3" r="2.3"/><circle cx="47.7" cy="487.5" r="2.3"/><path d="M40.3 484L47.7 480.3M40.3 484L47.7 487.5" fill="none" stroke="#555" stroke-width="1.4"/><rect x="39" y="524.9" width="11.9" height="11.8" rx="1.8"/><g fill="#fff"><circle cx="42.4" cy="530.8" r="1.5"/><circle cx="47.3" cy="527.6" r="1.6"/><circle cx="47.3" cy="533.7" r="1.6"/><path d="M42.4 530.8L47.3 527.6M42.4 530.8L47.3 533.7" stroke="#fff" stroke-width="1.1"/></g><rect x="39.1" y="571.9" width="11.9" height="12" rx="1.8"/><path d="M44 573.9h2.2v3.2h3v1.8h-3v3.3H44v-3.3h-3.1v-1.8H44z" fill="#fff"/><path d="M39.7 618.5H46.2L50.4 622.7V631.2H39.7Z M46.2 618.5V622.5H50.4" fill="none" stroke="#555" stroke-width="1.2"/><circle cx="24.5" cy="669.3" r="2.6"/><path d="M19.4 678.7c0-3.4 1.4-5.3 5.1-5.3s5.1 1.9 5.1 5.3z"/><circle cx="20" cy="666.9" r="2"/><circle cx="29" cy="666.9" r="2"/><path d="M17.1 672.8c0-2.2.8-3.5 2.8-3.5.6 0 1.1.1 1.4.3-.6.8-.8 1.7-.8 2.7 0 .2 0 .4.1.5z M32 672.8c0-2.2-.8-3.5-2.8-3.5-.6 0-1.1.1-1.4.3.6.8.8 1.7.8 2.7 0 .2 0 .4-.1.5z"/><path d="M44.9 711.9c.5 0 .8.3.8.8 2 .4 3.2 2.1 3.2 4.6 0 2.8.7 4.5 2 5.6v.6H38.9v-.6c1.3-1.1 2-2.8 2-5.6 0-2.5 1.2-4.2 3.2-4.6 0-.5.3-.8.8-.8z"/><path d="M43.3 723.6h3.2a1.6 1.6 0 0 1-3.2 0z"/><rect x="37.9" y="760.9" width="6" height="4.9"/><rect x="45" y="760.9" width="6" height="4.9"/><rect x="37.9" y="767" width="6" height="4.9"/><rect x="45" y="767" width="6" height="4.9"/><path d="M41 810L37.9 813.6H40V819H47.6L46 817.1H41.9V813.6H44.1Z"/><path d="M50 819L53 815.4H51V810H43.2L44.9 811.8H49.1V815.4H46.9Z"/><path d="M22 856.5H18.6A1 1 0 0 0 17.6 857.5V864.6A1 1 0 0 0 18.6 865.6H22" fill="none" stroke="#555" stroke-width="1.1"/><path d="M20 859.2H24.5V856L29 861.1L24.5 866V862.8H20Z"/></svg>
<div class="abs" style="left:0;top:917px;width:1902px;height:11px;background:#eef2f5;border-top:1px solid #7a7a7a;overflow:hidden">
 <svg class="ic" style="left:1626px;top:2px;width:14px;height:12px" viewBox="0 0 14 12"><path d="M1 11L6 6l7-5-2 6-5 4z" fill="none" stroke="#999" stroke-width="1.2"/></svg>
 <span class="abs" style="left:1645px;top:2px;font-size:13px;line-height:16px;color:#333">加速器</span>
 <svg class="ic" style="left:1691px;top:1px;width:12px;height:12px" viewBox="0 0 12 12"><path d="M6 0v8M2 4l4 4 4-4" fill="none" stroke="#999" stroke-width="1.3"/></svg>
 <span class="abs" style="left:1710px;top:2px;font-size:13px;line-height:16px;color:#333">下载</span>
 <div class="abs" style="left:1757px;top:1px;width:2px;height:10px;border-left:2px dotted #aaa"></div>
 <div class="abs" style="left:1765px;top:3px;width:15px;height:10px;border:1.5px solid #888"></div>
 <div class="abs" style="left:1795px;top:3px;width:13px;height:10px;border:1.5px solid #888;border-radius:3px 3px 0 0"></div>
 <div class="abs" style="left:1855px;top:3px;width:13px;height:10px;border:1.5px solid #888"></div>
 <div class="abs" style="left:1876px;top:3px;width:12px;height:12px;border:1.5px solid #888;border-radius:50%"></div>
</div>
<svg class="ic" style="left:1740px;top:860px;width:140px;height:80px" viewBox="1740 860 140 80"><g opacity="0.68" fill="#5b6064"><rect x="1747" y="881" width="95" height="41" rx="20.5"/><circle cx="1836.2" cy="901.5" r="29.6"/></g><circle cx="1836.2" cy="901.5" r="29.6" fill="#5b6064" opacity="0.08"/></svg>
<svg class="ic" style="left:1806px;top:872px;width:60px;height:60px" viewBox="0 0 60 60"><path d="M30 4A26 26 0 0 1 30 56" fill="none" stroke="#c8e4dc" stroke-width="1.5" opacity="0.85"/></svg>
<svg class="ic" style="left:1759px;top:888px;width:6px;height:9px" viewBox="0 0 6 9"><path d="M3 0L0 3h2v6h2V3h2z" fill="#8fc3e8"/></svg>
<svg class="ic" style="left:1759px;top:909px;width:6px;height:9px" viewBox="0 0 6 9"><path d="M3 9L0 6h2V0h2v6h2z" fill="#7fd08a"/></svg>
<span class="abs" style="left:1771px;top:886px;font-size:12px;line-height:13px;color:#f4f4f4;white-space:nowrap">1.9<span style="font-size:9px;color:#cfcfcf">K/s</span></span>
<span class="abs" style="left:1770px;top:907px;font-size:12px;line-height:13px;color:#f4f4f4;white-space:nowrap">4.5<span style="font-size:9px;color:#cfcfcf">K/s</span></span>
<svg class="ic" style="left:1816px;top:890px;width:42px;height:24px" viewBox="1816 890 42 24"><path d="M1828.5 910V893.3L1819.3 905.8H1832.3" fill="none" stroke="#f5f5f5" stroke-width="1.3"/><path d="M1844.6 898.6A5.4 5.4 0 1 1 1844.6 898.4C1844.8 904 1842.5 909.5 1836.5 910" fill="none" stroke="#f5f5f5" stroke-width="1.3"/><path d="M1854.2 903.3L1847.5 910.3" fill="none" stroke="#eee" stroke-width="1"/><circle cx="1848.8" cy="904.5" r="1.3" fill="none" stroke="#eee" stroke-width=".9"/><circle cx="1852.9" cy="909" r="1.3" fill="none" stroke="#eee" stroke-width=".9"/></svg>
</body></html>
